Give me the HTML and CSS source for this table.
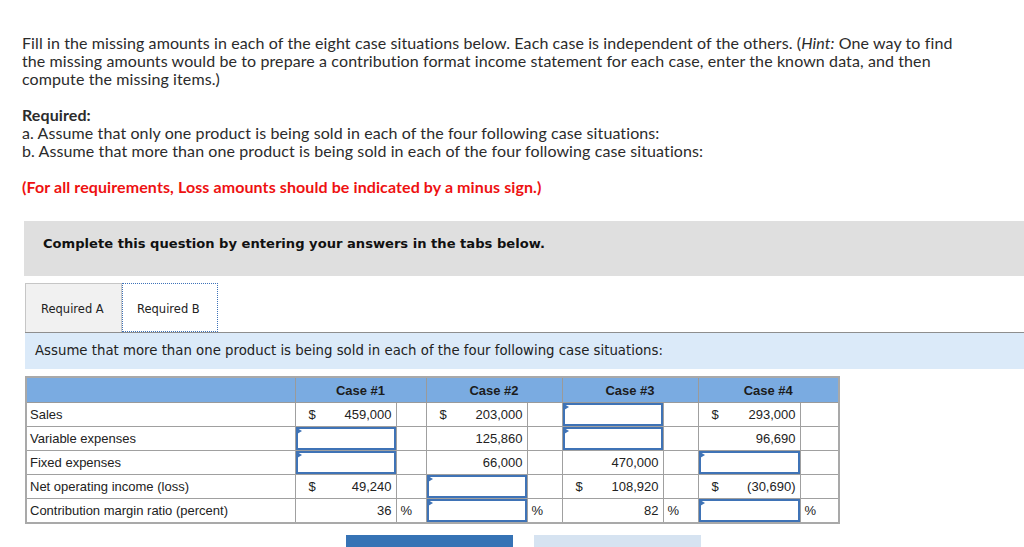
FILE: index.html
```html
<!DOCTYPE html>
<html>
<head>
<meta charset="utf-8">
<link rel="stylesheet" href="styles.css">
</head>
<body>
<div class="page">
  <div class="intro">
    <p class="para">Fill in the missing amounts in each of the eight case situations below. Each case is independent of the others. (<i>Hint:</i> One way to find the missing amounts would be to prepare a contribution format income statement for each case, enter the known data, and then compute the missing items.)</p>
    <p class="para"><b>Required:</b><br>a. Assume that only one product is being sold in each of the four following case situations:<br>b. Assume that more than one product is being sold in each of the four following case situations:</p>
    <p class="para red">(For all requirements, Loss amounts should be indicated by a minus sign.)</p>
  </div>

  <div class="complete">Complete this question by entering your answers in the tabs below.</div>

  <div class="tabs">
    <div class="tab">Required A</div>
    <div class="tab active">Required B</div>
  </div>
  <div class="instr">Assume that more than one product is being sold in each of the four following case situations:</div>

  <table class="grid">
    <colgroup>
      <col class="c-label"><col class="c-v1"><col class="c-p1"><col class="c-v"><col class="c-p"><col class="c-v"><col class="c-p"><col class="c-v4"><col class="c-p4">
    </colgroup>
    <thead>
      <tr><th></th><th colspan="2">Case #1</th><th colspan="2">Case #2</th><th colspan="2">Case #3</th><th colspan="2">Case #4</th></tr>
    </thead>
    <tbody>
      <tr>
        <td class="lbl">Sales</td>
        <td class="val"><span class="cur">$</span>459,000</td><td></td>
        <td class="val"><span class="cur">$</span>203,000</td><td></td>
        <td class="inp"><div class="box"></div></td><td></td>
        <td class="val"><span class="cur">$</span>293,000</td><td></td>
      </tr>
      <tr>
        <td class="lbl">Variable expenses</td>
        <td class="inp"><div class="box"></div></td><td></td>
        <td class="val">125,860</td><td></td>
        <td class="inp"><div class="box"></div></td><td></td>
        <td class="val">96,690</td><td></td>
      </tr>
      <tr>
        <td class="lbl">Fixed expenses</td>
        <td class="inp"><div class="box"></div></td><td></td>
        <td class="val">66,000</td><td></td>
        <td class="val">470,000</td><td></td>
        <td class="inp"><div class="box"></div></td><td></td>
      </tr>
      <tr class="total">
        <td class="lbl">Net operating income (loss)</td>
        <td class="val"><span class="cur">$</span>49,240</td><td></td>
        <td class="inp"><div class="box"></div></td><td></td>
        <td class="val"><span class="cur">$</span>108,920</td><td></td>
        <td class="val"><span class="cur">$</span>(30,690)</td><td></td>
      </tr>
      <tr class="total">
        <td class="lbl">Contribution margin ratio (percent)</td>
        <td class="val">36</td><td class="pct">%</td>
        <td class="inp"><div class="box"></div></td><td class="pct">%</td>
        <td class="val">82</td><td class="pct">%</td>
        <td class="inp"><div class="box"></div></td><td class="pct">%</td>
      </tr>
    </tbody>
  </table>

  <div class="nav">
    <div class="btn prev">&#8249; Required A</div>
    <div class="btn next">Required B &#8250;</div>
  </div>
</div>
</body>
</html>
```

FILE: styles.css
```css
html, body {
  margin: 0;
  padding: 0;
  overflow: hidden;
  background: #fff;
}
.page {
  padding: 34px 0 0 22px;
}
.intro {
  font-family: Lato, "Open Sans", sans-serif;
  font-size: 16px;
  line-height: 18px;
  letter-spacing: 0.1px;
  color: #2b2b2b;
  width: 950px;
}
.para {
  margin: 0 0 18px 0;
}
.para b { font-weight: 700; }
.red {
  color: #ee1111;
  font-weight: 700;
  margin-bottom: 0;
}
.complete {
  margin: 25px 0 0 2px;
  background: #dfdfdf;
  height: 55px;
  box-sizing: border-box;
  padding: 15px 0 0 19px;
  font-family: "DejaVu Sans", Verdana, sans-serif;
  font-weight: 700;
  font-size: 13.1px;
  color: #111;
}
.tabs {
  display: flex;
  margin: 7px 0 0 3px;
  height: 49px;
  border-bottom: 1px solid #8e8e8e;
}
.tab {
  font-family: "DejaVu Sans", Verdana, sans-serif;
  font-size: 11.5px;
  white-space: nowrap;
  color: #222;
  box-sizing: border-box;
  height: 49px;
  padding: 18px 0 0 15px;
  background: #f1f1f1;
  border: 1px solid #c6c6c6;
  border-bottom: none;
  width: 97px;
}
.tab.active {
  background: #fff;
  border: 1px dotted #3e72b8;
  width: 96px;
  padding-left: 14px;
}
.instr {
  margin-left: 3px;
  background: #dbeaf9;
  height: 36px;
  box-sizing: border-box;
  padding: 10px 0 0 10px;
  font-family: "DejaVu Sans", Verdana, sans-serif;
  font-size: 13.3px;
  color: #222;
}
.grid {
  margin: 7px 0 0 3px;
  border-collapse: collapse;
  table-layout: fixed;
  width: 813px;
  font-family: "Liberation Sans", Arial, sans-serif;
  font-size: 13px;
  color: #222;
  border: 2px solid #a9a9a9;
}
.c-label { width: 269px; }
.c-v1 { width: 101px; }
.c-p1 { width: 30px; }
.c-v { width: 101px; }
.c-p { width: 35px; }
.c-v4 { width: 102px; }
.c-p4 { width: 39px; }
.grid th {
  background: #7aabe1;
  height: 24px;
  padding: 0;
  font-weight: 700;
  font-size: 13px;
  text-align: center;
  border-left: 1px solid #9a9a9a;
  border-bottom: 1px solid #9a9a9a;
  color: #1c1c1c;
}
.grid th:first-child { border-left: none; }
.grid td {
  height: 23px;
  padding: 0;
  border: 1px solid #a0a0a0;
  vertical-align: middle;
}
.grid td.lbl {
  padding-left: 3px;
}
.grid td.val {
  text-align: right;
  padding-right: 4px;
}
.cur {
  float: left;
  padding-left: 13px;
}
.grid td.pct {
  padding-left: 4px;
}
.grid tr.total td:not(.lbl) {
  border-top: 1px solid #1a1a1a;
}
.grid td.inp {
  padding: 0;
}
.box {
  position: relative;
  height: 23px;
  box-sizing: border-box;
  border: 2px solid #3f73b6;
  background: #fff;
}
.box::before {
  content: "";
  position: absolute;
  left: -1px;
  top: -1px;
  border-top: 3px solid transparent;
  border-bottom: 3px solid transparent;
  border-left: 5px solid #3f73b6;
}
.nav {
  display: flex;
  justify-content: center;
  gap: 21px;
  width: 1003px;
  margin-top: 11px;
}
.btn {
  width: 167px;
  height: 40px;
  box-sizing: border-box;
  padding-top: 13px;
  text-align: center;
  font-family: "DejaVu Sans", Verdana, sans-serif;
  font-size: 14px;
}
.btn.prev {
  background: #3673b5;
  color: #fff;
}
.btn.next {
  background: #d6e3f1;
  color: #f4f7fb;
}
```
